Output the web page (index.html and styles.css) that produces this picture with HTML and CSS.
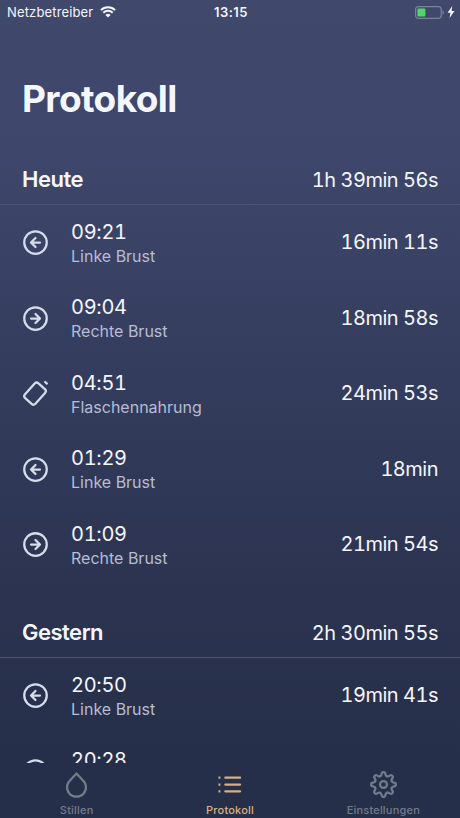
FILE: index.html
```
<!DOCTYPE html>
<html lang="de">
   <head>
      <meta charset="UTF-8">
      <meta name="viewport" content="width=device-width, initial-scale=1.0">
      <title>Protokoll</title>
      <link rel="stylesheet" href="styles.css">
   </head>
   <body>
      <svg class="defs">
         <symbol id="left" viewBox="0 0 24 24"><circle cx="12" cy="12" r="10"/><path d="M12 8l-4 4 4 4M16 12H8"/></symbol>
         <symbol id="right" viewBox="0 0 24 24"><circle cx="12" cy="12" r="10"/><path d="M12 16l4-4-4-4M8 12h8"/></symbol>
         <symbol id="bottle" viewBox="0 0 24 24"><rect x="5.4" y="3.3" width="12.4" height="17.6" rx="2.4" transform="rotate(42 11.6 12.1)"/><path d="M20.6 1.8l1.5 1.4"/></symbol>
         <path id="tooth" d="M-3.02-7.3C-2-7.72-1.8-8.3-1.7-9.3C-1.6-10.6-.9-11 0-11C.9-11 1.6-10.6 1.7-9.3C1.8-8.3 2-7.72 3.02-7.3"/>
      </svg>
      <div class="status">
         <div class="carrier">
            <span>Netzbetreiber</span>
            <svg class="wifi" viewBox="0 0 16 12"><path d="M.9 4.1a10.2 10.2 0 0 1 14.2 0M3.3 6.8a6.7 6.7 0 0 1 9.4 0"/><path class="fill" d="M8 11.6L5.4 9a3.7 3.7 0 0 1 5.2 0z"/></svg>
         </div>
         <div class="clock">13:15</div>
         <div class="power">
            <svg class="battery" viewBox="0 0 30 13"><rect class="case" x=".6" y=".6" width="25.6" height="11.8" rx="2.8"/><path class="cap" d="M27.5 4.3c1.8.4 1.8 4 0 4.4z"/><rect class="level" x="2.4" y="2.4" width="8" height="8.2" rx="1"/></svg>
            <svg class="bolt" viewBox="0 0 8 12"><path d="M5.2 0L.6 6.8h2.8L2.6 12l4.9-7H4.6z"/></svg>
         </div>
      </div>
      <div class="log">
         <h1>Protokoll</h1>
         <div class="day"><h2>Heute</h2><div class="duration">1h 39min 56s</div></div>
         <div class="row">
            <svg class="icon"><use href="#left"/></svg>
            <div class="entry"><div class="time">09:21</div><div class="type">Linke Brust</div></div>
            <div class="duration">16min 11s</div>
         </div>
         <div class="row">
            <svg class="icon"><use href="#right"/></svg>
            <div class="entry"><div class="time">09:04</div><div class="type">Rechte Brust</div></div>
            <div class="duration">18min 58s</div>
         </div>
         <div class="row">
            <svg class="icon"><use href="#bottle"/></svg>
            <div class="entry"><div class="time">04:51</div><div class="type">Flaschennahrung</div></div>
            <div class="duration">24min 53s</div>
         </div>
         <div class="row">
            <svg class="icon"><use href="#left"/></svg>
            <div class="entry"><div class="time">01:29</div><div class="type">Linke Brust</div></div>
            <div class="duration">18min</div>
         </div>
         <div class="row">
            <svg class="icon"><use href="#right"/></svg>
            <div class="entry"><div class="time">01:09</div><div class="type">Rechte Brust</div></div>
            <div class="duration">21min 54s</div>
         </div>
         <div class="day"><h2>Gestern</h2><div class="duration">2h 30min 55s</div></div>
         <div class="row">
            <svg class="icon"><use href="#left"/></svg>
            <div class="entry"><div class="time">20:50</div><div class="type">Linke Brust</div></div>
            <div class="duration">19min 41s</div>
         </div>
         <div class="row">
            <svg class="icon"><use href="#right"/></svg>
            <div class="entry"><div class="time">20:28</div><div class="type">&nbsp;</div></div>
         </div>
      </div>
      <div class="tabs">
         <div class="tab">
            <svg class="icon" viewBox="0 0 24 24"><path d="M12 2.2l5.8 6.2a8.4 8.4 0 1 1-11.6 0z"/></svg>
            <span>Stillen</span>
         </div>
         <div class="tab active">
            <svg class="icon" viewBox="0 0 24 24"><path d="M8.3 5.9H21.4M8.3 12H21.4M8.3 18.1H21.4"/><path class="dots" d="M2.2 5.9h1.7M2.2 12h1.7M2.2 18.1h1.7"/></svg>
            <span>Protokoll</span>
         </div>
         <div class="tab">
            <svg class="icon" viewBox="-12 -12 24 24"><circle r="3.1"/><use href="#tooth"/><use href="#tooth" transform="rotate(45)"/><use href="#tooth" transform="rotate(90)"/><use href="#tooth" transform="rotate(135)"/><use href="#tooth" transform="rotate(180)"/><use href="#tooth" transform="rotate(225)"/><use href="#tooth" transform="rotate(270)"/><use href="#tooth" transform="rotate(315)"/></svg>
            <span>Einstellungen</span>
         </div>
      </div>
   </body>
</html>
```
FILE: styles.css
```
*{
   box-sizing:border-box;
}
body{
   margin:0;
   height:818px;
   display:flex;
   flex-direction:column;
   overflow:hidden;
   font-family:Inter,sans-serif;
   color:#f4f7ff;
   background:linear-gradient(#40486b 0,#3e466b 150px,#2b3350 600px,#262f49 760px,#262f49);
}
svg{
   display:block;
   fill:none;
   stroke:currentColor;
   stroke-width:2;
   stroke-linecap:round;
   stroke-linejoin:round;
}
.defs{
   display:none;
}
.status{
   height:24px;
   flex:none;
   display:grid;
   grid-template-columns:1fr auto 1fr;
   align-items:center;
   padding:0 5px 0 7px;
   font-size:13px;
}
.carrier,.power{
   display:flex;
   align-items:center;
}
.carrier{
   gap:7px;
   letter-spacing:.15px;
}
.wifi{
   width:16px;
   height:12px;
   stroke-linecap:butt;
}
.wifi .fill{
   fill:currentColor;
   stroke:none;
}
.clock{
   font-weight:600;
   letter-spacing:.5px;
}
.power{
   justify-content:flex-end;
   gap:2px;
}
.battery{
   width:30px;
   height:13px;
}
.case{
   stroke:#7c829c;
   stroke-width:1.2;
}
.cap{
   fill:#7c829c;
   stroke:none;
}
.level{
   fill:#4cd964;
   stroke:none;
}
.bolt{
   width:8px;
   height:12px;
   fill:currentColor;
   stroke:none;
}
.log{
   flex:1;
   min-height:0;
   overflow:hidden;
}
h1{
   margin:0;
   height:105px;
   padding:52px 22px 0;
   font-size:37px;
   line-height:45px;
   font-weight:700;
   letter-spacing:-.6px;
}
.day{
   height:75.5px;
   display:flex;
   align-items:flex-end;
   justify-content:space-between;
   padding:0 22px 10px;
   border-bottom:1px solid #4d5577;
}
h2{
   margin:0;
   padding-bottom:1px;
   font-size:22px;
   line-height:28px;
   font-weight:600;
   letter-spacing:-.5px;
}
.row{
   height:75.5px;
   display:flex;
   align-items:center;
   padding:1px 22px 0;
}
.row .icon{
   width:27px;
   height:27px;
   color:#d5dcec;
}
.entry{
   flex:1;
   margin-left:22px;
}
.time{
   font-size:20px;
   line-height:26px;
   letter-spacing:-.3px;
   font-variant-numeric:tabular-nums;
}
.type{
   font-size:16px;
   line-height:22px;
   color:#b6bdd4;
}
.duration{
   font-size:20px;
   line-height:27px;
   letter-spacing:-.5px;
   font-variant-numeric:tabular-nums;
}
.tabs{
   height:55px;
   flex:none;
   display:flex;
   background:#262f49;
}
.tab{
   flex:1;
   display:flex;
   flex-direction:column;
   align-items:center;
   padding-top:8px;
   font-size:11px;
   line-height:14px;
   font-weight:500;
   letter-spacing:.2px;
   color:#747b8b;
}
.tab .icon{
   width:27px;
   height:27px;
   margin-bottom:5px;
}
.dots{
   stroke-linecap:butt;
}
.active{
   color:#d8af80;
}
```
